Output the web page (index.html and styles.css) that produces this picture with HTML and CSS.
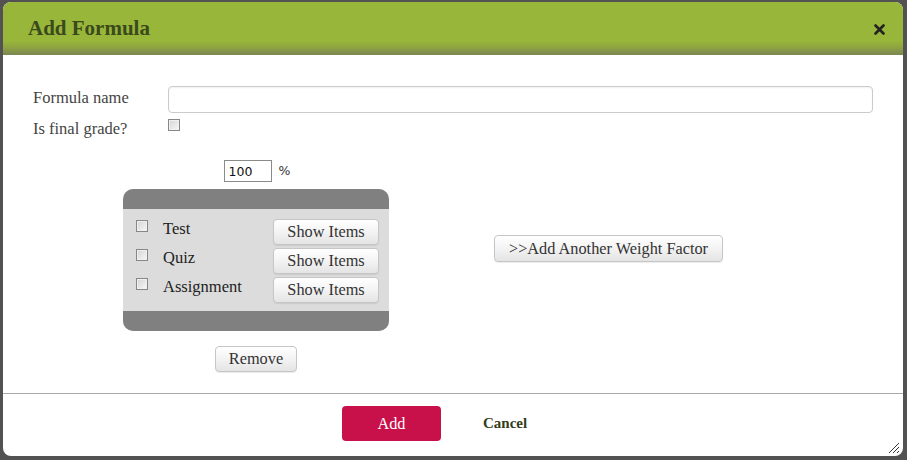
FILE: index.html
```html
<!DOCTYPE html>
<html>
<head>
<meta charset="utf-8">
<link rel="stylesheet" href="styles.css">
</head>
<body>
<div class="page">
  <div class="dialog">
    <div class="header">
      <h1 class="title">Add Formula</h1>
      <svg class="close" width="11" height="11" viewBox="0 0 11 11"><path d="M1.5 1.5 L9.5 9.5 M9.5 1.5 L1.5 9.5" stroke="#222" stroke-width="2.6" stroke-linecap="round"/></svg>
    </div>
    <div class="body">
      <div class="row row-name">
        <label class="label label-name">Formula name</label>
        <input class="text-input" type="text">
      </div>
      <div class="row row-final">
        <label class="label">Is final grade?</label>
        <input class="check" type="checkbox">
      </div>
      <div class="factors">
        <div class="factor">
          <div class="percent">
            <input class="pct-input" type="text" value="100">
            <span class="pct-sign">%</span>
          </div>
          <div class="box">
            <div class="box-bar"></div>
            <div class="box-list">
              <div class="item"><input class="check" type="checkbox"><span class="item-label">Test</span><button class="btn btn-show">Show Items</button></div>
              <div class="item"><input class="check" type="checkbox"><span class="item-label">Quiz</span><button class="btn btn-show">Show Items</button></div>
              <div class="item"><input class="check" type="checkbox"><span class="item-label">Assignment</span><button class="btn btn-show">Show Items</button></div>
            </div>
            <div class="box-bar"></div>
          </div>
          <button class="btn btn-remove">Remove</button>
        </div>
        <button class="btn btn-weight">&gt;&gt;Add Another Weight Factor</button>
      </div>
    </div>
    <div class="footer">
      <button class="btn-add">Add</button>
      <span class="cancel">Cancel</span>
      <svg class="grip" width="12" height="12" viewBox="0 0 12 12"><path d="M11 1 L1 11 M11 5 L5 11 M11 9 L9 11" stroke="#333" stroke-width="1"/></svg>
    </div>
  </div>
</div>
</body>
</html>
```

FILE: styles.css
```css
* { box-sizing: border-box; }
html, body { margin: 0; padding: 0; }
body {
  background: #525252;
  width: 907px;
  height: 460px;
  overflow: hidden;
  font-family: "Liberation Serif", serif;
}
.page {
  padding: 2px 4px 0 3px;
}
.dialog {
  width: 900px;
  height: 454px;
  background: #fff;
  border-radius: 8px;
  overflow: hidden;
  display: flex;
  flex-direction: column;
  position: relative;
}
.header {
  height: 53px;
  flex: none;
  background: linear-gradient(to bottom, #98b63a 0%, #98b63a 74%, #8ea241 86%, #7b8653 100%);
  display: flex;
  align-items: center;
  padding: 0 18px 0 25px;
}
.title {
  margin: 0;
  font-size: 21px;
  font-weight: bold;
  color: #3a4a1c;
  flex: 1;
  line-height: 1;
  margin-top: -1px;
}
.close { flex: none; margin-top: 1px; }
.body {
  flex: 1;
  padding: 31px 30px 0 30px;
}
.row { display: flex; }
.row-name { align-items: center; height: 27px; }
.label {
  width: 135px;
  flex: none;
  font-size: 16.5px;
  color: #444;
  line-height: 20px;
}
.label-name { margin-top: -4px; }
.text-input {
  width: 705px;
  height: 27px;
  border: 1px solid #cbcbcb;
  border-radius: 4px;
  box-shadow: inset 0 1px 2px rgba(0,0,0,0.06);
  margin: 0;
  padding: 0 6px;
}
.row-final { margin-top: 6px; height: 20px; }
.check {
  -webkit-appearance: none;
  appearance: none;
  width: 12px;
  height: 12px;
  margin: 0;
  flex: none;
  border: 1px solid #878787;
  background: linear-gradient(135deg, #d4d4d4, #f8f8f8);
  box-shadow: inset 0 0 0 1px #f0f0f0;
}
.factors {
  display: flex;
  margin-top: 21px;
  padding-left: 90px;
}
.factor {
  width: 266px;
  display: flex;
  flex-direction: column;
  align-items: center;
}
.percent {
  display: flex;
  align-items: center;
  height: 22px;
  padding-left: 2px;
}
.pct-input {
  width: 48px;
  height: 22px;
  border: 1px solid #8a8a8a;
  margin: 0;
  padding: 0 4px;
  font-family: "DejaVu Sans", sans-serif;
  font-size: 12.5px;
  color: #111;
}
.pct-sign {
  margin-left: 7px;
  font-family: "DejaVu Sans", sans-serif;
  font-size: 12.5px;
  color: #333;
  margin-top: -2px;
}
.box {
  margin-top: 7px;
  width: 266px;
  border-radius: 10px;
  overflow: hidden;
  background: #dcdcdc;
}
.box-bar { height: 20px; background: #808080; }
.box-list { padding: 10px 10px 8px 13px; }
.item {
  display: flex;
  align-items: flex-start;
  height: 26px;
  margin-bottom: 3px;
}
.item:last-child { margin-bottom: 0; }
.item .check { margin-top: 1px; }
.item-label {
  margin-left: 15px;
  font-size: 16.5px;
  line-height: 20px;
  color: #222;
}
.btn {
  font-family: "Liberation Serif", serif;
  font-size: 16.3px;
  color: #333;
  background: linear-gradient(to bottom, #ffffff 0%, #f3f3f3 50%, #e4e4e4 100%);
  border: 1px solid #c6c6c6;
  border-radius: 4px;
  box-shadow: 0 1px 1px rgba(0,0,0,0.08);
  padding: 0;
  cursor: pointer;
}
.btn-show {
  margin-left: auto;
  width: 106px;
  height: 26px;
}
.btn-remove {
  margin-top: 15px;
  width: 82px;
  height: 26px;
}
.btn-weight {
  flex: none;
  margin-left: 105px;
  margin-top: 75px;
  width: 229px;
  height: 27px;
}
.footer {
  height: 63px;
  flex: none;
  border-top: 1px solid #a8a8a8;
  display: flex;
  align-items: flex-start;
  padding: 12px 0 0 339px;
  position: relative;
}
.btn-add {
  width: 99px;
  height: 35px;
  border: none;
  border-radius: 4px;
  background: #c8114b;
  color: #fff;
  font-family: "Liberation Serif", serif;
  font-size: 16.3px;
  padding: 0;
}
.cancel {
  margin-left: 42px;
  font-size: 15px;
  font-weight: bold;
  color: #333c1a;
  line-height: 35px;
}
.grip {
  position: absolute;
  right: 3px;
  bottom: 2px;
}
```
